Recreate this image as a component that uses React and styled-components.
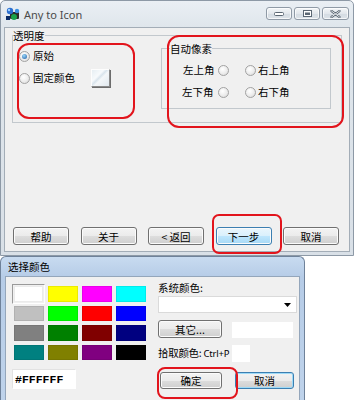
import React from 'react';
import styled, { createGlobalStyle, css } from 'styled-components';

const CJK = `"Noto Sans CJK SC", "Noto Sans", sans-serif`;

const Global = createGlobalStyle`
  html, body { margin: 0; padding: 0; background: #fff; overflow: hidden; }
  body { font-family: ${CJK}; color: #000; }
  * { box-sizing: border-box; }
`;

const Page = styled.div`
  width: 354px;
  height: 400px;
  display: flex;
  flex-direction: column;
`;

/* ---------- top window ---------- */
const Window = styled.div`
  position: relative;
  width: 354px;
  height: 256px;
  border: 1px solid #8d99a6;
  border-radius: 5px 5px 0 0;
  background: linear-gradient(#eaeff4 0px, #dfe6ec 26px, #d9e0e7 100%);
  padding: 0 3px 3px;
  display: flex;
  flex-direction: column;
`;

const TitleBar = styled.div`
  height: 26px;
  display: flex;
  align-items: center;
  padding: 0 1px 0 1px;
`;

const AppTitle = styled.span`
  font-family: "Noto Sans", sans-serif;
  font-size: 11px;
  color: #4a4a4a;
  margin-left: 3px;
  flex: 1;
`;

const Caption = styled.div`
  display: flex;
  gap: 2px;
  align-self: flex-start;
  margin-top: 6px;
`;

const CapButton = styled.div`
  width: ${(p) => p.$w}px;
  height: 13px;
  border: 1px solid #8f9aa6;
  border-radius: 3px;
  background: linear-gradient(#f4f6f8, #e2e7ec 50%, #d4dbe2 51%, #dde3e9);
  box-shadow: inset 0 0 0 1px rgba(255, 255, 255, 0.7);
  display: flex;
  align-items: center;
  justify-content: center;
`;

const Client = styled.div`
  flex: 1;
  background: #f0f0f0;
  border: 1px solid #a3adb7;
  display: flex;
  flex-direction: column;
`;

const Group = styled.fieldset`
  margin: ${(p) => p.$margin};
  padding: ${(p) => p.$padding};
  border: 1px solid #c2c8cd;
  min-width: 0;
  width: ${(p) => (p.$w ? `${p.$w}px` : 'auto')};
`;

const Legend = styled.legend`
  padding: 0;
  margin-left: ${(p) => p.$inset || 0}px;
  font-size: 10.5px;
  line-height: 13px;
  color: #000;
`;

const GroupBody = styled.div`
  display: flex;
  align-items: flex-start;
`;

const RadioCol = styled.div`
  display: flex;
  flex-direction: column;
  gap: 8px;
  padding: 7px 0 0 6px;
`;

const RadioRow = styled.div`
  display: flex;
  align-items: center;
  height: 14px;
  gap: ${(p) => p.$gap ?? 3}px;
  font-size: 10.5px;
  line-height: 14px;
`;

const RadioDot = styled.span`
  width: 11px;
  height: 11px;
  flex: none;
  border-radius: 50%;
  border: 1px solid #a2a2a2;
  background: radial-gradient(circle at 40% 35%, #ffffff 0%, #ececec 55%, #d4d4d4 100%);
  display: flex;
  align-items: center;
  justify-content: center;
  margin-left: ${(p) => p.$ml || 0}px;
`;

const RadioInner = styled.span`
  width: 5px;
  height: 5px;
  border-radius: 50%;
  background: radial-gradient(circle at 40% 35%, #9ad8fa, #1d5aa3);
`;

const ColorButton = styled.div`
  width: 19px;
  height: 18px;
  margin-left: 13px;
  border: 1px solid;
  border-color: #fdfdfd #8a8a8a #8a8a8a #fdfdfd;
  background: linear-gradient(135deg, #e6eef3 0%, #f7fafc 35%, #d9e4ec 45%, #f4f7f9 55%, #e0e8ee 100%);
  box-shadow: 1px 1px 0 #6c6c6c;
`;

const CornerGrid = styled.div`
  display: flex;
  flex-direction: column;
  gap: 8px;
  padding: 8px 0 9px 21px;
`;

const CornerLabel = styled.span`
  width: 32px;
  margin-left: ${(p) => p.$ml || 0}px;
`;

const ButtonBar = styled.div`
  margin-top: auto;
  display: flex;
  gap: 11.5px;
  padding: 0 0 6px 8px;
`;

const Button = styled.div`
  width: ${(p) => p.$w}px;
  height: ${(p) => p.$h || 18}px;
  margin-left: ${(p) => p.$ml || 0}px;
  border: 1px solid #707070;
  border-radius: 3px;
  background: linear-gradient(#f3f3f3 0%, #ebebeb 50%, #dddddd 51%, #cfcfcf 100%);
  box-shadow: inset 0 0 0 1px #fbfbfb;
  font-size: 10.5px;
  display: flex;
  align-items: center;
  justify-content: center;
  flex: none;
  ${(p) =>
    p.$variant === 'hot' &&
    css`
      border-color: #3c7fb1;
      background: linear-gradient(#eaf6fd 0%, #d9f0fc 50%, #bee6fd 51%, #a7d9f5 100%);
    `}
  ${(p) =>
    p.$variant === 'default' &&
    css`
      border-color: #3c7fb1;
      background: linear-gradient(#f2f2f2 0%, #ebebeb 50%, #dddddd 51%, #cfcfcf 100%);
      box-shadow: inset 0 0 0 1px #9edaf7;
    `}
`;

const Mark = styled.div`
  position: absolute;
  left: ${(p) => p.$x}px;
  top: ${(p) => p.$y}px;
  width: ${(p) => p.$w}px;
  height: ${(p) => p.$h}px;
  border: 2px solid #e2141c;
  border-radius: ${(p) => p.$r || 10}px;
  pointer-events: none;
`;

/* ---------- color dialog ---------- */
const Dialog = styled.div`
  position: relative;
  width: 305px;
  height: 144px;
  border: 1px solid #6f829a;
  border-bottom: none;
  border-radius: 6px 6px 0 0;
  background: linear-gradient(#c8dbf0 0px, #b6cce7 20px, #bfd3eb 100%);
  padding: 0 4px;
  display: flex;
  flex-direction: column;
`;

const DialogTitle = styled.div`
  height: 19px;
  display: flex;
  align-items: center;
  padding-left: 3px;
  font-size: 10.5px;
  color: #000;
`;

const DialogClient = styled.div`
  flex: 1;
  background: #f0f0f0;
  border: 1px solid #94a6bb;
  border-bottom: none;
  display: flex;
  align-items: flex-start;
`;

const LeftPane = styled.div`
  padding: 7px 0 0 6px;
  display: flex;
  flex-direction: column;
  gap: 7px;
`;

const Swatches = styled.div`
  display: grid;
  grid-template-columns: repeat(4, 34px);
  grid-auto-rows: 19.5px;
`;

const Swatch = styled.div`
  padding: 2px;
  display: flex;
  ${(p) =>
    p.$selected &&
    css`
      border: 1px solid;
      border-color: #9a9a9a #ffffff #ffffff #9a9a9a;
      padding: 1px;
      margin-right: 1px;
    `}
`;

const SwatchFill = styled.div`
  flex: 1;
  background: ${(p) => p.$c};
  border: 1px solid rgba(0, 0, 0, 0.08);
`;

const HexBox = styled.div`
  width: 64px;
  height: 20px;
  background: #fff;
  border: 1px solid;
  border-color: #e2e2e2 #ffffff #ffffff #e2e2e2;
  font-family: "Liberation Mono", monospace;
  font-weight: bold;
  font-size: 11.5px;
  display: flex;
  align-items: center;
  padding-left: 2px;
`;

const RightPane = styled.div`
  width: 139px;
  margin-left: 10px;
  padding-top: 4px;
  display: flex;
  flex-direction: column;
  font-size: 10.5px;
`;

const PaneLabel = styled.div`
  line-height: 14px;
  height: 14px;
`;

const Select = styled.div`
  margin-top: 1px;
  height: 17px;
  background: #fff;
  border: 1px solid #dadada;
  display: flex;
  align-items: center;
  justify-content: flex-end;
  padding-right: 5px;
`;

const PaneRow = styled.div`
  margin-top: ${(p) => p.$mt}px;
  display: flex;
  align-items: ${(p) => p.$align || 'center'};
  height: ${(p) => p.$h}px;
`;

const WhiteBox = styled.div`
  width: ${(p) => p.$w}px;
  height: ${(p) => p.$h}px;
  margin-left: ${(p) => p.$ml || 0}px;
  background: #fff;
  flex: none;
`;

const PickLabel = styled.span`
  width: 74px;
  flex: none;
  white-space: nowrap;
  line-height: 14px;
  letter-spacing: -0.3px;
`;

const Latin = styled.span`
  font-family: "Noto Sans", sans-serif;
  font-size: 9.5px;
  letter-spacing: -0.2px;
`;

const colors = [
  '#ffffff', '#ffff00', '#ff00ff', '#00ffff',
  '#c0c0c0', '#00ff00', '#ff0000', '#0000ff',
  '#808080', '#008000', '#800000', '#000080',
  '#008080', '#808000', '#800080', '#000000',
];

function Radio({ checked, ml }) {
  return <RadioDot $ml={ml}>{checked && <RadioInner />}</RadioDot>;
}

function AppIcon() {
  return (
    <svg width="16" height="16" viewBox="0 0 16 16">
      <rect x="5" y="6" width="9" height="7" rx="1" fill="#2b2b2b" />
      <circle cx="5" cy="5" r="3.2" fill="#2c6fd0" />
      <circle cx="4" cy="4" r="1.2" fill="#9fd0ff" />
      <circle cx="9" cy="11" r="3" fill="#1aa34a" />
      <circle cx="12" cy="5" r="2.2" fill="#3b8fe0" />
      <rect x="1" y="10" width="4" height="4" fill="#0a2a66" />
    </svg>
  );
}

export default function App() {
  return (
    <Page>
      <Global />
      <Window>
        <TitleBar>
          <AppIcon />
          <AppTitle>Any to Icon</AppTitle>
          <Caption>
            <CapButton $w={26}>
              <svg width="10" height="4" viewBox="0 0 10 4">
                <rect x="0.5" y="0.5" width="9" height="3" rx="1" fill="#fff" stroke="#5b6773" />
              </svg>
            </CapButton>
            <CapButton $w={26}>
              <svg width="9" height="7" viewBox="0 0 9 7">
                <rect x="0.5" y="0.5" width="8" height="6" fill="#fff" stroke="#5b6773" />
                <rect x="2" y="2.5" width="5" height="2.5" fill="#5b6773" />
              </svg>
            </CapButton>
            <CapButton $w={27}>
              <svg width="11" height="8" viewBox="0 0 11 8">
                <path d="M1.5 1 L9.5 7 M9.5 1 L1.5 7" stroke="#5b6773" strokeWidth="2.2" strokeLinecap="round" />
                <path d="M1.5 1 L9.5 7 M9.5 1 L1.5 7" stroke="#fff" strokeWidth="0.8" strokeLinecap="round" />
              </svg>
            </CapButton>
          </Caption>
        </TitleBar>
        <Client>
          <Group $margin="1px 7px 0 7px" $padding="0 0 13px 0">
            <Legend>透明度</Legend>
            <GroupBody>
              <RadioCol>
                <RadioRow>
                  <Radio checked />
                  <span>原始</span>
                </RadioRow>
                <RadioRow>
                  <Radio />
                  <span>固定颜色</span>
                  <ColorButton />
                </RadioRow>
              </RadioCol>
              <Group $margin="0 10px 0 auto" $padding="0" $w={170}>
                <Legend $inset={8}>自动像素</Legend>
                <CornerGrid>
                  <RadioRow $gap={0}>
                    <CornerLabel>左上角</CornerLabel>
                    <Radio ml={3} />
                    <Radio ml={16} />
                    <CornerLabel $ml={2}>右上角</CornerLabel>
                  </RadioRow>
                  <RadioRow $gap={0}>
                    <CornerLabel $ml={-1}>左下角</CornerLabel>
                    <Radio ml={4} />
                    <Radio ml={16} />
                    <CornerLabel $ml={2}>右下角</CornerLabel>
                  </RadioRow>
                </CornerGrid>
              </Group>
            </GroupBody>
          </Group>
          <ButtonBar>
            <Button $w={56}>帮助</Button>
            <Button $w={56}>关于</Button>
            <Button $w={56}>&lt; 返回</Button>
            <Button $w={56} $variant="hot">下一步</Button>
            <Button $w={56}>取消</Button>
          </ButtonBar>
        </Client>
        <Mark $x={16} $y={42} $w={118} $h={76} $r={12} />
        <Mark $x={166} $y={34} $w={177} $h={93} $r={12} />
        <Mark $x={211} $y={213} $w={70} $h={40} $r={7} />
      </Window>
      <Dialog>
        <DialogTitle>选择颜色</DialogTitle>
        <DialogClient>
          <LeftPane>
            <Swatches>
              {colors.map((c, i) => (
                <Swatch key={i} $selected={i === 0}>
                  <SwatchFill $c={c} />
                </Swatch>
              ))}
            </Swatches>
            <HexBox>#FFFFFF</HexBox>
          </LeftPane>
          <RightPane>
            <PaneLabel>系统颜色:</PaneLabel>
            <Select>
              <svg width="7" height="4" viewBox="0 0 7 4">
                <path d="M0 0 H7 L3.5 4 Z" fill="#000" />
              </svg>
            </Select>
            <PaneRow $mt={7} $h={18} $align="flex-end">
              <Button $w={64} $h={18}>其它...</Button>
              <WhiteBox $w={61} $h={16} $ml={10} />
            </PaneRow>
            <PaneRow $mt={7} $h={17}>
              <PickLabel>
                拾取颜色: <Latin>Ctrl+P</Latin>
              </PickLabel>
              <WhiteBox $w={18} $h={17} />
            </PaneRow>
            <PaneRow $mt={10} $h={17}>
              <Button $w={62} $h={17} $ml={2}>确定</Button>
              <Button $w={59} $h={17} $ml={13} $variant="default">取消</Button>
            </PaneRow>
          </RightPane>
        </DialogClient>
        <Mark $x={156} $y={110} $w={81} $h={32} $r={8} />
      </Dialog>
    </Page>
  );
}
